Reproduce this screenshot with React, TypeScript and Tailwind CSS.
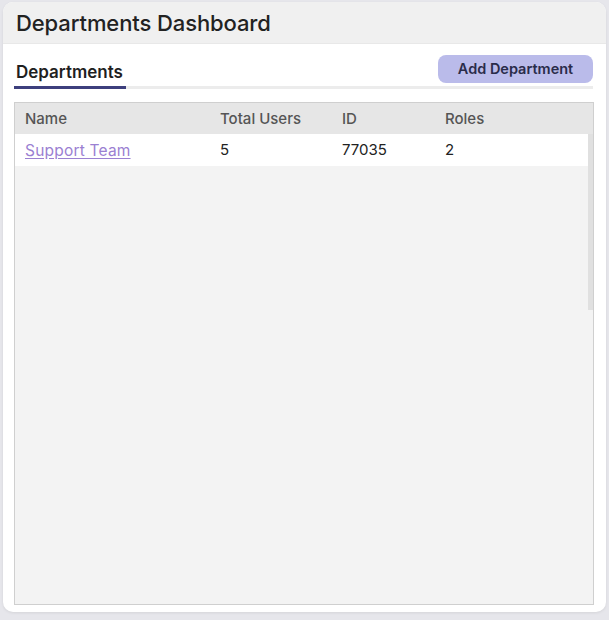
import React from 'react';

const departments = [{ name: 'Support Team', users: 5, id: 77035, roles: 2 }];

const App: React.FC = () => {
  return (
    <div
      className="w-[609px] h-[620px] bg-[#e6e6eb] pt-[2px] px-[3px]"
      style={{ fontFamily: 'Inter, "Noto Sans", sans-serif' }}
    >
      <div className="h-[610px] bg-white rounded-[10px] shadow-[0_1px_3px_rgba(0,0,0,0.08)] flex flex-col overflow-hidden">
        {/* Header */}
        <div className="h-[42px] bg-[#f0f0f0] flex items-center px-[13px] pt-[1px] border-b border-[#e8e8e8]">
          <h1 className="text-[22px] font-medium text-[#222] tracking-[-0.1px]">Departments Dashboard</h1>
        </div>

        <div className="flex-1 flex flex-col pl-[11px] pr-[12px] pb-[7px]">
          {/* Tabs + action */}
          <div className="relative mt-[11px] flex items-end h-[34px]">
            <div className="flex-1 flex items-end border-b-[3px] border-[#ececec] mr-[1px]">
              <div className="-mb-[3px] border-b-[3px] border-[#3d3f7d] pl-[2px] pr-[3px] pb-[1px]">
                <span className="text-[17px] font-semibold text-[#1f1f1f]">Departments</span>
              </div>
            </div>
            <button className="absolute right-[1px] top-0 h-[28px] w-[155px] rounded-[8px] bg-[#babbea] text-[14.5px] font-semibold text-[#2a2c4a]">
              Add Department
            </button>
          </div>

          {/* Table */}
          <div className="mt-[13px] flex-1 flex flex-col border border-[#cfcfcf] bg-[#f3f3f3]">
            <div className="h-[31px] bg-[#e6e6e6] flex items-center pt-[2px] text-[15px] font-medium text-[#555]">
              <div className="w-[205px] pl-[10px]">Name</div>
              <div className="w-[122px]">Total Users</div>
              <div className="w-[103px]">ID</div>
              <div>Roles</div>
            </div>
            <div className="flex-1 flex">
              <div className="flex-1">
                {departments.map((d) => (
                  <div key={d.id} className="h-[32px] bg-white flex items-center pt-[1px] text-[15px] text-[#222]">
                    <div className="w-[205px] pl-[10px]">
                      <a href="#" className="text-[15.5px] text-[#9b80d2] underline underline-offset-2 tracking-[0.2px]">{d.name}</a>
                    </div>
                    <div className="w-[122px]">{d.users}</div>
                    <div className="w-[103px]">{d.id}</div>
                    <div>{d.roles}</div>
                  </div>
                ))}
              </div>
              <div className="w-[5px]">
                <div className="h-[176px] bg-[#e0e0e0]" />
              </div>
            </div>
          </div>
        </div>
      </div>
    </div>
  );
};

export default App;
